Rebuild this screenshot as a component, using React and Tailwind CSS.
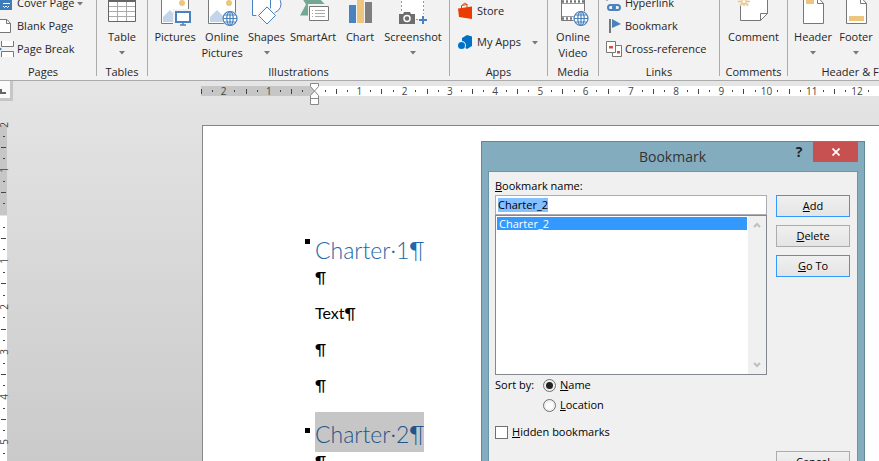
import { useState } from "react";

const BODY_NUMBERS = 12;

// Quarter-unit marks between two ruler positions: number, dot, tick, dot
function buildMarks(from, to) {
  const marks = [];
  for (let i = from; i <= to; i++) {
    if (i === 0) marks.push("");
    else if (i % 4 === 0) marks.push(String(Math.abs(i / 4)));
    else if (i % 2 === 0) marks.push("tick");
    else marks.push("dot");
  }
  return marks;
}

function Marks({ from, to, vertical }) {
  return buildMarks(from, to).map((mark, i) => (
    <span key={i} className={`flex items-center justify-center ${vertical ? "h-0 w-full" : "h-full w-0"}`}>
      {mark === "tick" && <i className={`shrink-0 bg-[#444] ${vertical ? "h-px w-[5px]" : "h-[5px] w-px"}`} />}
      {mark === "dot" && <i className={`shrink-0 bg-[#444] ${vertical ? "h-px w-[2px]" : "h-[2px] w-px"}`} />}
      {mark !== "tick" && mark !== "dot" && <span className={vertical ? "-rotate-90" : ""}>{mark}</span>}
    </span>
  ));
}

function Caret() {
  return (
    <svg className="h-1 w-[6px] shrink-0" viewBox="0 0 6 4">
      <path d="M0 0h6L3 3.5z" fill="#777" />
    </svg>
  );
}

function Group({ label, className, children }) {
  return (
    <section className={`flex h-[76px] shrink-0 flex-col border-r border-[#ababab] ${className}`}>
      <div className="flex h-16 shrink-0 flex-col">{children}</div>
      <h2 className="text-center leading-4 whitespace-nowrap">{label}</h2>
    </section>
  );
}

function BigButton({ lines, caret, className, children }) {
  return (
    <button type="button" className={`flex shrink-0 flex-col items-center whitespace-nowrap ${className}`}>
      <svg className="mb-px h-7 w-8 shrink-0" viewBox="0 0 32 28" fill="none">
        {children}
      </svg>
      {lines.map((line) => (
        <span key={line} className="leading-4">
          {line}
        </span>
      ))}
      {caret && (
        <span className="flex h-4 items-center">
          <Caret />
        </span>
      )}
    </button>
  );
}

function SmallButton({ label, caret, className = "gap-[3px]", children }) {
  return (
    <button type="button" className={`flex h-[23px] items-center whitespace-nowrap ${className}`}>
      <svg className="h-5 w-4 shrink-0" viewBox="0 0 16 20" fill="none">
        {children}
      </svg>
      <span>{label}</span>
      {caret && <Caret />}
    </button>
  );
}

function Globe() {
  return (
    <g stroke="#4a82bd" strokeWidth="1.2">
      <circle cx="24" cy="18.5" r="8" fill="#f2f2f2" stroke="none" />
      <circle cx="24" cy="18.5" r="7" fill="#fff" />
      <ellipse cx="24" cy="18.5" rx="3.2" ry="7" />
      <path d="M24 11.5v14M17 18.5h14M18.2 15h11.6M18.2 22h11.6" />
    </g>
  );
}

function PhotoFrame() {
  return (
    <>
      <path d="M2.5-2v25.500h27V-2" fill="#fff" stroke="#7a7a7a" />
      <path d="M4 22v-5l7-7 7 7v5z" fill="#c3d5ea" />
      <circle cx="23" cy="3" r="3" fill="#eec57c" />
    </>
  );
}

function Ribbon() {
  return (
    <header className="flex h-[81px] shrink-0 overflow-hidden border-b border-[#ababab] bg-[#f2f2f2] text-[#262626]">
      <Group label="Pages" className="-ml-[10px] w-[107px]">
        <div className="-mt-2 flex flex-col pl-[10px]">
          <SmallButton label="Cover Page" caret className="gap-px [&>svg:last-child]:ml-[2px]">
            <path d="M0 0h12v16H0z" fill="#3f7dba" />
            <path d="M3 9.500h7M3 12l1.500 1.500L6 12l1.500 1.500L9 12" stroke="#fff" />
          </SmallButton>
          <SmallButton label="Blank Page" className="gap-px">
            <path d="M-1 2.500h8l3.500 4v9H-1z" fill="#fff" stroke="#777" />
            <path d="M6.500 2.500v4h4" stroke="#777" />
          </SmallButton>
          <SmallButton label="Page Break" className="gap-px">
            <path d="M1.500 1v5.500h12V1M1.500 17v-5.500h12V17" fill="#fff" stroke="#777" />
            <path d="M-2 6l4 3-4 3z" fill="#3f7dba" />
          </SmallButton>
        </div>
      </Group>

      <Group label="Tables" className="w-[51px]">
        <BigButton lines={["Table"]} caret className="w-full">
          <path d="M2.500-2v23.500h27V-2" fill="#fff" stroke="#666" />
          <path d="M3 6.500h26M3 11.500h26M3 16.500h26M11.500 2v19M20.500 2v19" stroke="#aaa" />
          <path d="M2 0h28v2H2z" fill="#666" />
        </BigButton>
      </Group>

      <Group label="Illustrations" className="w-[302px]">
        <div className="flex pl-[3px]">
          <BigButton lines={["Pictures"]} className="w-12">
            <PhotoFrame />
            <path d="M14 9h18v19H14z" fill="#f2f2f2" />
            <path d="M17 12h14v10H17z" fill="#fff" stroke="#4a82bd" strokeWidth="2" />
            <path d="M24 23v2M21 25h6" stroke="#4a82bd" strokeWidth="1.500" />
          </BigButton>
          <BigButton lines={["Online", "Pictures"]} className="w-[46px]">
            <PhotoFrame />
            <Globe />
          </BigButton>
          <BigButton lines={["Shapes"]} caret className="w-[43px]">
            <circle cx="21" cy="4" r="9" fill="#fff" stroke="#4a82bd" />
            <path d="M1.500-2v17.500h18V-2" fill="#fff" stroke="#4a82bd" />
            <path d="M16 5l11 10.500L16 26 5 15.500z" fill="#f2f2f2" />
            <path d="M16 7l8.500 8.500L16 24l-8.500-8.500z" fill="#fff" stroke="#4a82bd" />
          </BigButton>
          <BigButton lines={["SmartArt"]} className="w-[50px]">
            <path d="M5-2h17l6 6.500-5 11H3L9 4.500z" fill="#72a894" />
            <path d="M11 4h21v20H11z" fill="#f2f2f2" />
            <path d="M12.500 6.500h19v14h-19z" fill="#fff" stroke="#777" />
            <path d="M18 10.500h10M18 13.500h10M18 16.500h10M15 10.500h1M15 13.500h1M15 16.500h1" stroke="#aaa" />
          </BigButton>
          <BigButton lines={["Chart"]} className="w-11">
            <path d="M5 5h7v18H5z" fill="#4a82bd" />
            <path d="M13 0h7v23h-7z" fill="#eec57c" />
            <path d="M21 2h7v21h-7z" fill="#7f7f7f" />
          </BigButton>
          <BigButton lines={["Screenshot"]} caret className="w-[62px]">
            <path d="M4-1h23v20H4z" fill="#fff" />
            <path d="M4.500 1v10M26.500 1v13M19 19.500h4" stroke="#999" strokeDasharray="2 2" />
            <path d="M2 14h4l1-2h6l1 2h4v10H2z" fill="#6e6e6e" />
            <circle cx="10" cy="18.500" r="3" fill="#6e6e6e" stroke="#fff" strokeWidth="1.500" />
            <path d="M26 16v8M22 20h8" stroke="#4a82bd" strokeWidth="2" />
          </BigButton>
        </div>
      </Group>

      <Group label="Apps" className="w-[98px]">
        <div className="flex flex-col gap-2 pl-2">
          <SmallButton label="Store">
            <path d="M0 6.500l14-2v12.500L1 15z" fill="#eb3c00" />
            <path d="M3.500 7V3.500L9 2.500V7M5 3c0-2 3.500-2.500 4 0" stroke="#eb3c00" />
          </SmallButton>
          <SmallButton label="My Apps" caret className="gap-[3px] [&>svg:last-child]:ml-2">
            <path d="M4 5l5-3 5 1.500V13l-5 3-5-3z" fill="#0072c6" />
            <circle cx="3.500" cy="12.500" r="4.500" fill="#f2f2f2" />
            <circle cx="3.500" cy="12.500" r="3.500" fill="#0072c6" />
          </SmallButton>
        </div>
      </Group>

      <Group label="Media" className="w-[51px]">
        <BigButton lines={["Online", "Video"]} className="w-full">
          <path d="M4.500-2v22.500h23V-2" fill="#fff" stroke="#777" />
          <path d="M5 1.500h22M5 18.500h22" stroke="#777" strokeWidth="2.500" strokeDasharray="2 2" />
          <path d="M5 3.500h22M5 16.500h22" stroke="#999" />
          <Globe />
        </BigButton>
      </Group>

      <Group label="Links" className="w-[121px]">
        <div className="-mt-2 flex flex-col pl-[7px]">
          <SmallButton label="Hyperlink">
            <path d="M1 7V3h10v4" stroke="#777" strokeDasharray="2 1" />
            <g stroke="#4a82bd" strokeWidth="2">
              <rect x="2" y="11" width="7" height="5" rx="2.500" />
              <rect x="7" y="11" width="7" height="5" rx="2.500" />
            </g>
          </SmallButton>
          <SmallButton label="Bookmark">
            <path d="M4 2v14" stroke="#777" strokeWidth="2" />
            <path d="M6 2l9 5-9 4z" fill="#4a82bd" />
          </SmallButton>
          <SmallButton label="Cross-reference">
            <path d="M6.500 5.500h9v11h-9z" fill="#fff" stroke="#777" />
            <path d="M.5 1.500h9v11h-9z" fill="#fff" stroke="#777" />
            <path d="M3 6h4v2.500H3zM11 11h3v2.500h-3z" fill="#d8502f" />
          </SmallButton>
        </div>
      </Group>

      <Group label="Comments" className="w-[68px]">
        <BigButton lines={["Comment"]} className="w-full">
          <path d="M2.500-2v22.500h20l7-7V-2" fill="#fff" stroke="#777" />
          <path d="M22.500 20.500v-7h7" stroke="#777" />
          <path d="M0-2h11v8H0z" fill="#f2f2f2" />
          <path d="M0 1.500h12M6-2v8M2-2.500l8 8M10-2.500l-8 8" stroke="#eec57c" strokeWidth="1.500" />
          <circle cx="6" cy="1.500" r="1.500" fill="#fff" />
        </BigButton>
      </Group>

      <Group label="Header & Footer" className="w-[153px]">
        <div className="flex pl-[3px]">
          <BigButton lines={["Header"]} caret className="w-11">
            <path d="M6.500-2v25.500h20V3.500l-5-5.500" fill="#fff" stroke="#777" />
            <path d="M20.500-2v5.500h6" stroke="#777" />
            <path d="M9 0h8v4H9z" fill="#eec57c" />
          </BigButton>
          <BigButton lines={["Footer"]} caret className="w-[42px]">
            <path d="M6.500-2v25.500h20V3.500l-5-5.500" fill="#fff" stroke="#777" />
            <path d="M20.500-2v5.500h6" stroke="#777" />
            <path d="M9 16h15v5H9z" fill="#eec57c" />
          </BigButton>
        </div>
      </Group>
    </header>
  );
}

function HorizontalRuler() {
  return (
    <div className="flex h-11 shrink-0 text-[10px] leading-[10px] text-[#444]">
      <div className="flex h-5 w-[13px] shrink-0 border-r-3 border-b-3 border-[#c6c6c6] bg-[#fafafa]">
        <svg className="h-4 w-[10px]" viewBox="0 0 10 16">
          <path d="M1 8v4h5" fill="none" stroke="#666" strokeWidth="2" />
        </svg>
      </div>
      <div className="mt-[5px] ml-[188px] flex h-[10px] w-[113px] shrink-0 justify-between bg-[#c6c6c6]">
        <Marks from={-10} to={0} />
      </div>
      <div className="relative mt-[5px] flex h-[10px] w-[566px] shrink-0 justify-between bg-white">
        <Marks from={0} to={BODY_NUMBERS * 4 + 2} />
        <svg className="absolute -top-[3px] -left-1 h-[22px] w-[9px]" viewBox="0 0 9 22">
          <g fill="#fff" stroke="#888">
            <path d="M.5.5h8v3l-4 4.500-4-4.500zM4.500 8l4 4.500v3h-8v-3zM.5 15.500h8v6h-8z" />
          </g>
        </svg>
      </div>
    </div>
  );
}

function VerticalRuler() {
  return (
    <div className="flex w-[7px] shrink-0 flex-col text-[10px] leading-[10px] text-[#444]">
      <div className="flex h-[91px] shrink-0 flex-col justify-between border-b border-[#e4e4e4] bg-[#c6c6c6]">
        <Marks from={-8} to={0} vertical />
      </div>
      <div className="flex h-[249px] shrink-0 flex-col justify-between bg-white">
        <Marks from={0} to={22} vertical />
      </div>
    </div>
  );
}

function Heading({ selected, children }) {
  return (
    <h1 className="flex items-center">
      <span className={`mr-[5px] size-[5px] shrink-0 bg-black ${selected ? "mb-1" : "mb-[14px]"}`} />
      <span
        className={`pt-1 font-[Lato] text-[23px] leading-9 font-light ${
          selected ? "bg-[#c6c6c6] text-[#1f558b]" : "text-[#2068ac]"
        }`}
      >
        {children}
      </span>
    </h1>
  );
}

function Paragraph({ className = "", children }) {
  return (
    <p className={`pb-[2px] pl-[10px] font-[Lato] text-[16px] leading-[18px] text-black ${className}`}>{children}</p>
  );
}

function Document() {
  return (
    <article className="ml-[195px] flex flex-1 flex-col overflow-hidden border-t border-l border-[#868686] bg-white pt-[102px] pl-[102px]">
      <Heading>Charter·1¶</Heading>
      <Paragraph>¶</Paragraph>
      <Paragraph className="mt-4">Text¶</Paragraph>
      <Paragraph className="mt-4">¶</Paragraph>
      <Paragraph className="mt-4 mb-4">¶</Paragraph>
      <Heading selected>Charter·2¶</Heading>
      <Paragraph>¶</Paragraph>
    </article>
  );
}

function DialogButton({ accent, className = "", children }) {
  return (
    <button
      type="button"
      className={`h-[22px] w-[74px] shrink-0 border bg-linear-to-b from-[#f0f0f0] to-[#e4e4e4] ${
        accent ? "border-[#3399ff]" : "border-[#acacac]"
      } ${className}`}
    >
      {children}
    </button>
  );
}

function SortOption({ value, sort, setSort, children }) {
  return (
    <label className="flex h-5 items-center gap-1">
      <input
        type="radio"
        name="sort"
        value={value}
        checked={sort === value}
        onChange={() => setSort(value)}
        className="size-[13px] appearance-none rounded-full border border-[#707070] bg-white bg-clip-content p-[2px] checked:bg-[#222]"
      />
      <span>{children}</span>
    </label>
  );
}

function BookmarkDialog() {
  const [name, setName] = useState("Charter_2");
  const [sort, setSort] = useState("name");
  const [hidden, setHidden] = useState(false);

  return (
    <div
      role="dialog"
      aria-labelledby="dialog-title"
      className="absolute top-[141px] left-[481px] w-[384px] border border-[#5f8797] bg-[#84acbf] px-[6px] pb-[6px] text-black"
    >
      <div className="flex h-[29px] items-start">
        <h2 id="dialog-title" className="flex-1 pt-1 pl-[72px] text-center text-[14px] leading-[22px] text-[#333]">
          Bookmark
        </h2>
        <button type="button" aria-label="Help" className="h-5 w-7 text-[14px] leading-5 font-bold text-[#222]">
          ?
        </button>
        <button type="button" aria-label="Close" className="flex h-5 w-[45px] items-center justify-center bg-[#c75050]">
          <svg className="h-2 w-2" viewBox="0 0 8 8">
            <path d="M.5.5l7 7M7.500.5l-7 7" stroke="#fff" strokeWidth="1.700" />
          </svg>
        </button>
      </div>

      <div className="flex h-[310px] justify-between border border-[#6b95a8] bg-[#f0f0f0] pr-[7px] pl-[6px]">
        <div className="flex w-[272px] flex-col">
          <label htmlFor="bookmark-name" className="pt-[6px] pb-px leading-4">
            <u>B</u>ookmark name:
          </label>
          <div className="flex h-5 items-center border border-[#abadb3] bg-white pl-[2px]">
            <input
              id="bookmark-name"
              value={name}
              onChange={(e) => setName(e.target.value)}
              className="field-sizing-content h-[14px] bg-[#84bfff] leading-[14px] outline-none"
            />
          </div>
          <div className="flex h-[160px] border border-[#828790] bg-white">
            <ul role="listbox" aria-label="Bookmarks" className="flex-1 p-px">
              <li role="option" aria-selected="true" className="bg-[#3399ff] pl-[2px] leading-[13px] text-white">
                Charter_2
              </li>
            </ul>
            <div className="flex w-[18px] flex-col items-center justify-between bg-[#f0f0f0] py-[6px]">
              <svg className="h-[6px] w-2" viewBox="0 0 8 6" fill="none">
                <path d="M1 5l3-3 3 3" stroke="#bfbfbf" strokeWidth="2" />
              </svg>
              <svg className="h-[6px] w-2" viewBox="0 0 8 6" fill="none">
                <path d="M1 1l3 3 3-3" stroke="#bfbfbf" strokeWidth="2" />
              </svg>
            </div>
          </div>
          <fieldset className="flex">
            <legend className="float-left w-12 pt-[2px] leading-4">Sort by:</legend>
            <div className="flex flex-col">
              <SortOption value="name" sort={sort} setSort={setSort}>
                <u>N</u>ame
              </SortOption>
              <SortOption value="location" sort={sort} setSort={setSort}>
                <u>L</u>ocation
              </SortOption>
            </div>
          </fieldset>
          <label className="mt-[7px] flex h-5 items-center gap-1">
            <input
              type="checkbox"
              checked={hidden}
              onChange={(e) => setHidden(e.target.checked)}
              className="size-[13px] appearance-none border border-[#707070] bg-white checked:bg-[#222]"
            />
            <span>
              <u>H</u>idden bookmarks
            </span>
          </label>
        </div>

        <div className="flex flex-col gap-2 pt-[23px]">
          <DialogButton accent>
            <u>A</u>dd
          </DialogButton>
          <DialogButton>
            <u>D</u>elete
          </DialogButton>
          <DialogButton accent>
            <u>G</u>o To
          </DialogButton>
          <DialogButton className="mt-auto mb-[7px]">Cancel</DialogButton>
        </div>
      </div>
    </div>
  );
}

export default function App() {
  return (
    <div className="relative flex h-screen flex-col overflow-hidden font-['Open_Sans',sans-serif] text-[11px]">
      <Ribbon />
      <main className="flex min-h-0 flex-1 flex-col bg-linear-to-b from-[#e5e5e5] to-[#cacaca]">
        <HorizontalRuler />
        <div className="flex min-h-0 flex-1">
          <VerticalRuler />
          <Document />
        </div>
      </main>
      <BookmarkDialog />
    </div>
  );
}
